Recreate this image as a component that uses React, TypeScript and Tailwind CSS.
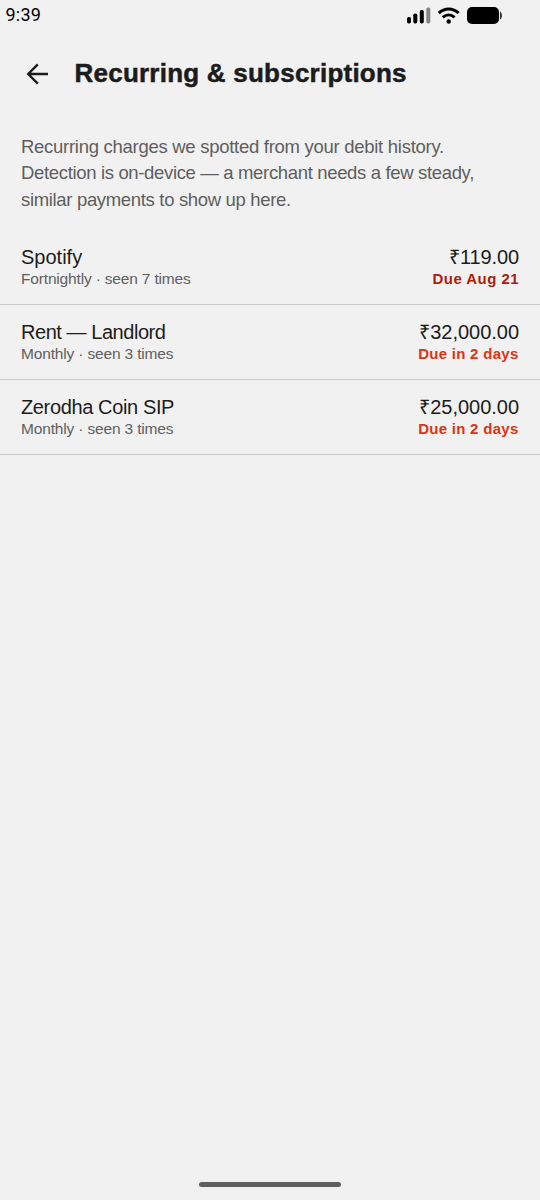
type Charge = {
  name: string;
  nameClass: string;
  detail: string;
  detailClass: string;
  amount: string;
  amountClass: string;
  due: string;
  dueClass: string;
};

const charges: Charge[] = [
  {
    name: "Spotify",
    nameClass: "tracking-[0px]",
    detail: "Fortnightly · seen 7 times",
    detailClass: "tracking-[-0.17px]",
    amount: "₹119.00",
    amountClass: "tracking-[-0.1px]",
    due: "Due Aug 21",
    dueClass: "text-[#b01c0c] tracking-[0.45px]",
  },
  {
    name: "Rent — Landlord",
    nameClass: "tracking-[-0.45px]",
    detail: "Monthly · seen 3 times",
    detailClass: "tracking-[-0.16px]",
    amount: "₹32,000.00",
    amountClass: "tracking-[-0.02px]",
    due: "Due in 2 days",
    dueClass: "mr-[0.5px] text-[#dc3413] tracking-[0.28px]",
  },
  {
    name: "Zerodha Coin SIP",
    nameClass: "tracking-[-0.37px]",
    detail: "Monthly · seen 3 times",
    detailClass: "tracking-[-0.16px]",
    amount: "₹25,000.00",
    amountClass: "tracking-[-0.02px]",
    due: "Due in 2 days",
    dueClass: "mr-[0.5px] text-[#dc3413] tracking-[0.28px]",
  },
];

const StatusBar = () => {
  return (
    <div className="flex h-8 items-start justify-between pl-[5.5px] pr-[37px] text-black">
      <span className="mt-[5px] font-[Roboto,sans-serif] text-[18px] leading-5 tracking-[0.2px]">9:39</span>

      <svg width="97" height="20" viewBox="0 0 97 20" className="mt-[6px]" fill="currentColor">
        {/* SIGNAL */}
        <rect x="1" y="11" width="4" height="6.5" rx="1.7" />
        <rect x="7.3" y="7.5" width="4" height="10" rx="1.7" />
        <rect x="13.8" y="4" width="4" height="13.5" rx="1.7" />
        <rect x="20.3" y="1.5" width="4" height="16" rx="1.7" fill="#858585" />
        {/* WIFI */}
        <g fill="none" stroke="currentColor" strokeWidth="3">
          <path d="M32.8 7.2 C38.6 1.6 46.8 1.6 52.6 7.2" />
          <path d="M36.8 11.3 C40.4 8.2 45 8.2 48.6 11.3" />
        </g>
        <circle cx="42.7" cy="15.5" r="2.2" />
        {/* BATTERY */}
        <rect x="61" y="1" width="32" height="17" rx="5" />
        <path d="M94.2 5.5 C96.2 6 96.2 13 94.2 13.5 Z" />
      </svg>
    </div>
  );
};

const ChargeRow = ({ charge }: { charge: Charge }) => {
  return (
    <li className="flex h-[75px] justify-between border-b border-[#cbcbcb] px-[21px] pt-[15px] whitespace-nowrap">
      <div>
        <p className="text-[20px] leading-[25px] text-[#1c1c1c]">
          <span className={charge.nameClass}>{charge.name}</span>
        </p>
        <p className="text-[15.5px] leading-[18px] text-[#606060]">
          <span className={charge.detailClass}>{charge.detail}</span>
        </p>
      </div>
      <div className="text-right">
        <p className="text-[20px] leading-[25px] text-[#1c1c1c]">
          <span className={charge.amountClass}>{charge.amount}</span>
        </p>
        <p className="text-[15px] leading-[18px] font-bold">
          <span className={charge.dueClass}>{charge.due}</span>
        </p>
      </div>
    </li>
  );
};

const App = () => {
  return (
    <div className="flex h-[1200px] w-[540px] flex-col overflow-hidden bg-[#f1f1f1] font-[Liberation_Sans,Arial,sans-serif]">
      <StatusBar />

      {/* HEADER */}
      <header className="flex h-[84px] items-center pl-[26px]">
        <svg
          width="22"
          height="22"
          viewBox="0 0 22 22"
          fill="none"
          stroke="#1c1c1c"
          strokeWidth="2.4"
        >
          <path d="M22 11 H2.5 M11.8 1.3 L2.2 11 L11.8 20.7" />
        </svg>
        <h1 className="mb-[2px] ml-[26.5px] text-[26px] font-bold whitespace-nowrap text-[#1c1c1c] [-webkit-text-stroke:0.5px_#1c1c1c]">
          <span className="tracking-[0.23px]">Recurring &amp; subscriptions</span>
        </h1>
      </header>

      {/* INTRO */}
      <p className="mt-[17.5px] flex flex-col items-start pl-[21px] text-[18.5px] leading-[26.5px] whitespace-nowrap text-[#5e5e5e]">
        <span className="tracking-[-0.28px]">Recurring charges we spotted from your debit history.</span>
        <span className="tracking-[-0.34px]">Detection is on-device — a merchant needs a few steady,</span>
        <span className="tracking-[-0.33px]">similar payments to show up here.</span>
      </p>

      <ul className="mt-[17px]">
        {charges.map((charge) => (
          <ChargeRow key={charge.name} charge={charge} />
        ))}
      </ul>

      {/* HOME INDICATOR */}
      <div className="mx-auto mt-auto mb-[13px] h-[5px] w-[142px] rounded-full bg-[#606060]" />
    </div>
  );
};

export default App;
